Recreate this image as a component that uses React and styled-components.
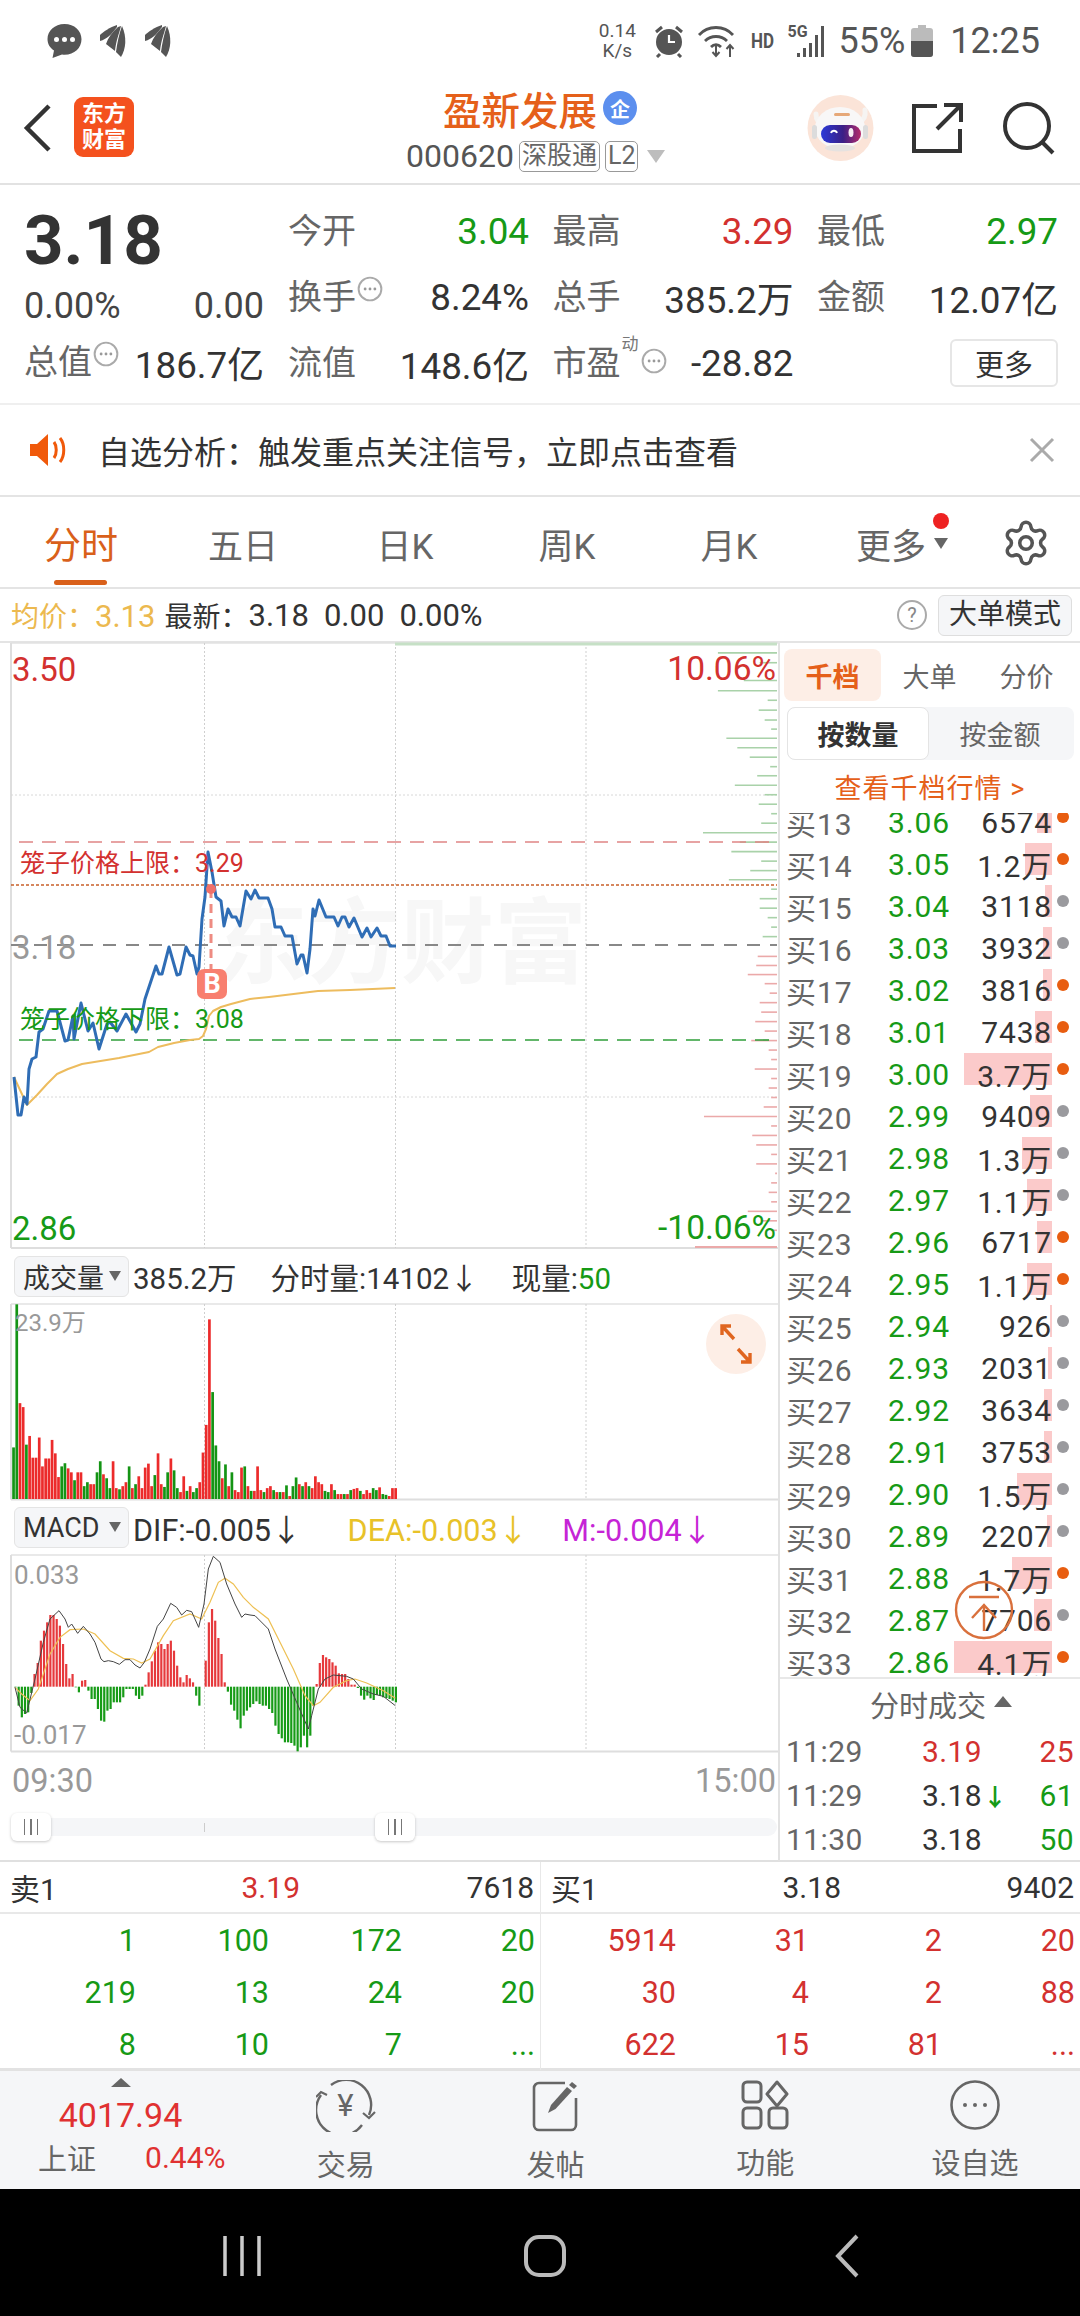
import React from 'react'
import styled, { createGlobalStyle } from 'styled-components'
import { Settings } from 'lucide-react'

const GlobalStyle = createGlobalStyle`
html, body { margin: 0; padding: 0; background: #fff; }
body { font-family: Roboto, "Noto Sans CJK SC", sans-serif; color: #333; }
* { box-sizing: border-box; }
`
const RED = '#d3312f'
const GREEN = '#169a16'
const ORANGE = '#e5601a'

const Page = styled.div`
width: 1080px; height: 2316px; display: flex; flex-direction: column; overflow: hidden; background: #fff;
`
const StatusBar = styled.div`
height: 75px; display: flex; align-items: center; justify-content: space-between; padding: 6px 40px 0 46px; color: #555;
`
const StatusGroup = styled.div`
display: flex; align-items: center; gap: ${p => p.$gap || 0}px;
`
const NetSpeed = styled.div`
width: 44px; font-size: 19px; line-height: 20px; text-align: center; margin-right: 14px;
`
const HdText = styled.span`
font-size: 20px; font-weight: 700; margin: 0 11px 0 8px; transform: scaleX(.85);
`
const SignalWrap = styled.div`
position: relative; width: 38px; height: 34px; margin-right: 13px;
`
const FiveG = styled.span`
position: absolute; left: 0; top: -2px; font-size: 16px; font-weight: 700;
`
const Battery = styled.span`
font-size: 36px; margin-right: 6px;
`
const Clock = styled.span`
font-size: 36px; margin-left: 17px;
`
const Header = styled.div`
height: 110px; display: flex; align-items: center; position: relative; border-bottom: 2px solid #e2e2e2; padding-left: 22px;
`
const Logo = styled.div`
width: 60px; height: 60px; border-radius: 9px; background: #f4511e; color: #fff; margin-left: 20px; font-size: 22px; font-weight: 700;
line-height: 26px; text-align: center; padding-top: 4px; margin-top: -4px;
`
const TitleBlock = styled.div`
position: absolute; left: 406px; top: 0; width: 280px; display: flex; flex-direction: column;
`
const TitleRow = styled.div`
display: flex; align-items: center; padding-left: 37px; height: 54px; margin-top: 6px;
color: ${ORANGE}; font-size: 38.5px; font-weight: 500;
`
const QiBadge = styled.span`
width: 34px; height: 34px; border-radius: 50%; background: #5c8fee; color: #fff; font-size: 20px; font-weight: 700; display: flex; align-items: center; justify-content: center; margin-left: 6px;
`
const CodeRow = styled.div`
display: flex; align-items: center; font-size: 32px; color: #555; margin-top: 4px; height: 34px;
`
const TagBadge = styled.span`
border: 1.5px solid #999; border-radius: 5px; font-size: 25px; line-height: 28px; height: 31px; padding: 0 2px; margin-left: ${p => p.$ml}px; color: #666; white-space: nowrap;
`
const DownTri = styled.span`
width: 0; height: 0; border-left: 9px solid transparent; border-right: 9px solid transparent; border-top: 13px solid #bdbdbd; margin-left: 9px;
`
const HeaderRight = styled.div`
margin-left: auto; display: flex; align-items: center; margin-right: 24px; gap: 36px; margin-top: -2px;
`
const SearchSvg = styled.svg`
margin-left: 3px;
`
const Quote = styled.div`
height: 220px; display: flex; padding: 13px 23px 0 24px; border-bottom: 2px solid #efefef;
`
const QuoteLeft = styled.div`
width: 240px; margin-right: 24px; display: flex; flex-direction: column; flex: none;
`
const BigPrice = styled.div`
font-size: 69px; font-weight: 700; height: 86px; line-height: 86px; color: #333; margin-bottom: 6px;
`
const ChangeRow = styled.div`
display: flex; justify-content: space-between; font-size: 36px; height: 32px; line-height: 32px; color: #444; margin-bottom: 7px;
`
const TotalRow = styled.div`
display: flex; align-items: center; height: 66px; font-size: 36.800px; color: #333;
`
const Label = styled.span`
font-size: 34px; color: #666; white-space: nowrap; line-height: 1;
`
const TotalValue = styled.span`
margin-left: auto;
`
const StatGrid = styled.div`
flex: 1; display: grid; grid-template-columns: repeat(3, 241px); grid-auto-rows: 66px; column-gap: 23.5px;
`
const Stat = styled.div`
display: flex; align-items: center; justify-content: space-between; font-size: 36.800px; color: ${p => p.$color || '#333'};
`
const LabelGroup = styled.div`
display: flex; align-items: flex-start; position: relative;
`
const DotsWrap = styled.span`
display: flex; margin-top: ${p => p.$mt ?? -4}px; margin-left: ${p => p.$ml ?? 1}px;
`
const Dong = styled.span`
font-size: 17px; color: #777; margin-top: -10px; line-height: 1; margin-left: 1px;
`
const MoreBtn = styled.div`
margin-left: auto; width: 108px; height: 48px; border: 2px solid #e6e6e6; border-radius: 6px; font-size: 29px; display: flex; align-items: center; justify-content: center; color: #333;
`
const Notice = styled.div`
height: 92px; display: flex; align-items: center; padding: 0 25px 0 29px; border-bottom: 2px solid #e4e4e4; font-size: 32px; color: #333;
`
const NoticeText = styled.span`
margin-left: 29px;
`
const NoticeClose = styled.span`
margin-left: auto; display: flex;
`
const Tabs = styled.div`
height: 92px; display: grid; grid-template-columns: repeat(6, 162px) 108px; align-items: center; border-bottom: 2px solid #e4e4e4;
`
const Tab = styled.div`
position: relative; text-align: center; font-size: ${p => p.$active ? 37 : 35}px; color: ${p => p.$active ? '#d9601a' : '#666'}; margin-top: 2px;
`
const TabLine = styled.i`
position: absolute; left: 54px; width: 53px; bottom: -15px; height: 5px; border-radius: 3px; background: #d9601a;
`
const MoreMark = styled.i`
position: absolute; left: 123px; top: -5px; width: 16px; height: 16px; border-radius: 50%; background: #ee2222;
`
const MoreTri = styled.i`
position: absolute; left: 124px; top: 20px; border-left: 7px solid transparent; border-right: 7px solid transparent; border-top: 11px solid #666;
`
const GearCell = styled.div`
display: flex; padding-left: 29px; color: #555; margin-top: 2px;
`
const InfoRow = styled.div`
height: 54px; display: flex; align-items: center; padding: 0 8px 0 11px; border-bottom: 2px solid #e4e4e4; font-size: 28px; color: #333; white-space: nowrap;
`
const AvgText = styled.span`
color: #ecb94f; margin-right: 9px;
`
const InfoNum = styled.span`
font-size: 31px; margin-left: ${p => p.$ml || 0}px;
`
const HelpIcon = styled.span`
margin-left: auto; width: 30px; height: 30px; border: 2.5px solid #aaa; border-radius: 50%; display: flex; align-items: center; justify-content: center; font-size: 20px; color: #888; margin-right: 11px;
`
const BigOrderBtn = styled.span`
width: 134px; height: 41px; background: #f5f6f8; border: 1.5px solid #dedede; border-radius: 6px; text-align: center; font-size: 28px; line-height: 38px; color: #333;
`
const Main = styled.div`
height: 1219px; display: grid; grid-template-columns: 778px 302px; border-bottom: 2px solid #e0e0e0;
`
const LeftCol = styled.div`
display: flex; flex-direction: column; padding-left: 11px; width: 778px;
`
const ChartBox = styled.div`
position: relative; width: 767px; height: ${p => p.$h}px; flex: none;
`
const ChartSvg = styled.svg`
position: absolute; inset: 0; display: block; overflow: visible;
`
const Watermark = styled.span`
position: absolute; left: 204px; top: 247px; font-size: 93px; line-height: 110px; font-weight: 700; color: #f7f7f7; white-space: nowrap;
`
const Overlay = styled.span`
position: absolute; top: ${p => p.$y}px; transform: translateY(-50%); white-space: nowrap; line-height: 1;
left: ${p => p.$left !== undefined ? `${p.$left}px` : 'auto'}; right: ${p => p.$right !== undefined ? `${p.$right}px` : 'auto'};
font-size: ${p => p.$size}px; color: ${p => p.$color};
`
const BMark = styled.span`
position: absolute; left: 186px; top: 326px; width: 30px; height: 30px; border-radius: 7px; background: #f87f6f; color: #fff; font-weight: 700; font-size: 27px; display: flex; align-items: center; justify-content: center;
`
const IndicatorHead = styled.div`
height: ${p => p.$h}px; display: flex; align-items: center; font-size: ${p => p.$size}px; color: #333; flex: none; margin-left: 3px; white-space: nowrap;
`
const Selector = styled.div`
width: 115px; height: 41px; background: #f5f6f8; border: 1.5px solid #e4e4e4; border-radius: 6px; display: flex; align-items: center; padding-left: 8px; font-size: 27px; color: #333; position: relative; margin-right: 4px; flex: none;
`
const SelectorTri = styled.i`
position: absolute; right: 7px; top: 14px; border-left: 6px solid transparent; border-right: 6px solid transparent; border-top: 10px solid #666;
`
const HeadItem = styled.span`
color: ${p => p.$color || '#333'}; margin-left: ${p => p.$ml || 0}px;
`
const ExpandBtn = styled.span`
position: absolute; left: 695px; top: 11px; width: 60px; height: 60px; border-radius: 50%; background: #fdeee6; display: flex; align-items: center; justify-content: center;
`
const TimeAxis = styled.div`
height: 57px; display: flex; justify-content: space-between; align-items: center; font-size: 32.5px; color: #999; width: 766px; padding: 0 1px; flex: none;
`
const SliderRow = styled.div`
position: relative; width: 766px; height: 18px; background: #f5f6f8; border-radius: 9px; margin-top: 9px; flex: none;
`
const SliderTick = styled.i`
position: absolute; left: 193px; top: 5px; width: 1px; height: 9px; background: #ccc;
`
const Handle = styled.span`
position: absolute; left: ${p => p.$x}px; top: -5px; width: 40px; height: 28px; background: #fff; border-radius: 6px; box-shadow: 0 1px 3px rgba(0,0,0,.22); display: flex; align-items: center; justify-content: center; gap: 5px;
& i { width: 1.5px; height: 16px; background: #777; }
`
const RightCol = styled.div`
border-left: 2px solid #e2e2e2; display: flex; flex-direction: column; position: relative; min-width: 0;
`
const SideTabs = styled.div`
display: grid; grid-template-columns: 97px 97px 97px; padding: 6px 0 0 4px;
`
const SideTab = styled.div`
height: 52px; display: flex; align-items: center; justify-content: center; font-size: 27px; border-radius: 8px;
background: ${p => p.$active ? '#fdeee6' : 'transparent'}; color: ${p => p.$active ? ORANGE : '#666'}; font-weight: ${p => p.$active ? 700 : 400};
`
const SubTabs = styled.div`
margin: 6px 6px 0 7px; height: 53px; background: #f5f6f8; border-radius: 8px; display: flex;
`
const SubTab = styled.div`
width: 142px; display: flex; align-items: center; justify-content: center; font-size: 27px;
${p => p.$active ? 'background:#fff;border:1.5px solid #e4e4e4;border-radius:8px;font-weight:700;color:#333;' : 'color:#666;'}
`
const DepthLink = styled.div`
height: 53px; font-size: 27px; color: ${ORANGE}; display: flex; align-items: center; justify-content: center; letter-spacing: 1px;
`
const DepthList = styled.div`
height: 863px; overflow: hidden; position: relative; flex: none;
`
const DepthInner = styled.div`
margin-top: -13px;
`
const DepthRow = styled.div`
position: relative; height: 42px; display: grid; grid-template-columns: 102px 60px 104px; align-items: center; padding-left: 6px; font-size: 30px; padding-bottom: 8px; letter-spacing: .9px;
`
const DepthLabel = styled.span`
color: #666;
`
const DepthPrice = styled.span`
color: ${GREEN};
`
const DepthBar = styled.i`
position: absolute; top: 1px; right: 28px; height: 32px; background: #fbcaca;
`
const DepthVol = styled.span`
position: relative; text-align: right; color: #333; white-space: nowrap; letter-spacing: .8px;
`
const DepthDot = styled.i`
position: absolute; right: 11px; top: 11px; width: 12px; height: 12px; border-radius: 50%; background: ${p => p.$hot ? '#e85d10' : '#9a9a9e'};
`
const TopBtn = styled.span`
position: absolute; left: 174px; top: 766px; display: flex;
`
const TradeHead = styled.div`
height: 52px; border-top: 2px solid #e8e8e8; display: flex; align-items: center; justify-content: center; font-size: 29px; color: #666; flex: none; gap: 8px; padding-left: 22px; margin-top: 1px;
`
const UpTri = styled.i`
border-left: 9px solid transparent; border-right: 9px solid transparent; border-bottom: 11px solid #666; margin-top: -6px;
`
const TradeRow = styled.div`
height: 44px; display: grid; grid-template-columns: 136px 60px 1fr; align-items: center; padding: 0 6px 0 6px; font-size: 30px; letter-spacing: .4px;
`
const TradeTime = styled.span`
color: #666;
`
const TradePrice = styled.span`
color: ${p => p.$color}; position: relative; white-space: nowrap;
`
const TradeArrow = styled.span`
color: ${GREEN}; font-size: 24px; font-weight: 700; margin-left: 1px;
`
const TradeVol = styled.span`
text-align: right; color: ${p => p.$color};
`
const Book = styled.div`
height: 209px; display: grid; grid-template-columns: 541px 539px; border-bottom: 3px solid #e2e2e2; flex: none;
`
const BookSide = styled.div`
display: flex; flex-direction: column; border-right: ${p => p.$line ? '1.5px solid #e8e8e8' : 'none'};
`
const BookHead = styled.div`
height: 52px; display: grid; grid-template-columns: 160px 130px 1fr; align-items: center; padding: 0 6px 0 10px; font-size: 30px; border-bottom: 2px solid #e8e8e8;
& span:nth-child(n+2) { text-align: right; }
`
const BookGrid = styled.div`
display: grid; grid-template-columns: repeat(4, 133px); justify-content: end; grid-auto-rows: 52px; align-items: center; padding-right: 5px; font-size: 30.500px; color: ${p => p.$color};
& span { text-align: right; }
`
const BottomBar = styled.div`
height: 118px; background: #f5f6f8; display: grid; grid-template-columns: 241px repeat(4, 1fr); flex: none;
`
const IndexBlock = styled.div`
display: flex; flex-direction: column; align-items: center; padding-top: 7px; position: relative;
`
const IndexTri = styled.i`
border-left: 10px solid transparent; border-right: 10px solid transparent; border-bottom: 9px solid #666;
`
const IndexValue = styled.div`
color: #e03131; font-size: 34px; line-height: 40px; margin-top: 8px;
`
const IndexLower = styled.div`
width: 100%; display: flex; align-items: center; padding-left: 38px; margin-top: 5px; height: 34px;
`
const IndexName = styled.span`
font-size: 29px; color: #666;
`
const IndexPct = styled.span`
font-size: 30px; color: #e03131; margin-left: 49px;
`
const ToolItem = styled.div`
display: flex; flex-direction: column; align-items: center; padding-top: 9px; color: #666; font-size: 29px;
& svg { display: block; }
& span { margin-top: 14px; line-height: 40px; }
`
const NavBar = styled.div`
background: #000; display: grid; grid-template-columns: repeat(3, 302.5px); flex: 1; padding: 6px 0 0 90.75px;
`
const NavCell = styled.div`
display: flex; align-items: center; justify-content: center;
`

const toPts = arr => arr.map(([x, y]) => `${x},${y}`).join(' ')

const bluePts = [[14,1078],[18,1116],[21,1116],[24,1098],[27,1105],[29,1070],[32,1060],[36,1058],[39,1033],[43,1030],[49,1012],[57,1012],[65,1042],[68,1041],[73,1017],[74,1040],[81,1004],[88,1032],[93,1024],[99,1050],[107,1025],[110,1023],[117,1032],[126,1015],[136,1033],[140,1025],[145,1000],[156,967],[159,975],[162,975],[169,948],[177,976],[180,975],[186,948],[190,956],[193,957],[197,975],[199,968],[202,920],[205,898],[208,853],[212,873],[216,898],[221,902],[224,927],[228,910],[232,918],[236,918],[240,927],[246,892],[251,900],[255,891],[259,899],[268,899],[272,910],[275,928],[281,928],[285,937],[292,937],[297,965],[301,956],[303,956],[307,974],[310,950],[313,910],[315,917],[319,901],[326,918],[334,918],[338,927],[342,918],[345,918],[349,928],[354,919],[362,938],[367,929],[371,938],[377,929],[381,937],[386,937],[390,947],[396,947]]
const avgPts = [[14,1078],[27,1106],[37,1096],[47,1085],[57,1075],[68,1070],[82,1065],[119,1059],[149,1053],[158,1048],[174,1044],[190,1041],[199,1040],[203,1037],[206,1030],[209,1017],[213,1012],[221,1008],[231,1005],[250,1000],[269,998],[318,992],[350,991],[395,989]]

const greenDepth = [[35,1443],[60,1527],[105,1495],[131,1443],[155,1543],[180,1525],[205,1537],[228,1550],[251,1460],[275,1482],[299,1507],[323,1548],[346,1522],[370,1477],[394,1537],[418,1525],[442,1550],[466,1530],[490,1413],[514,1487],[538,1470],[562,1530],[586,1508],[609,1465],[633,1550],[657,1527],[681,1527],[705,1543],[729,1550],[753,1533]]
const redDepth = [[803,1523],[826,1520],[849,1503],[872,1537],[896,1547],[920,1527],[944,1530],[968,1518],[992,1537],[1016,1510],[1040,1545],[1064,1550],[1088,1517],[1112,1550],[1136,1545],[1160,1550],[1184,1535],[1208,1415],[1232,1550],[1256,1512],[1280,1520],[1304,1550],[1328,1520],[1352,1558],[1376,1550],[1400,1545],[1424,1550],[1448,1503],[1472,1530],[1496,1550]]

const volData = 'g502 g140 r390 r400 g495 r473 r528 r528 r477 r550 r530 r530 r483 r517 r577 g550 g542 r555 r565 g585 r565 r565 g600 g590 r595 r595 g565 g537 r570 g580 g605 r537 r605 g608 r600 r590 g550 r605 g595 r575 r605 r553 r543 r600 g572 r517 r595 g602 g565 r530 g560 g605 r615 r575 g612 r600 g615 g605 r590 r515 r445 r178 g362 g497 g537 r580 g545 r600 g565 r610 r615 r553 g550 r600 g612 r612 r550 r610 g615 r605 r600 g610 r615 g615 r615 g598 r625 g600 g578 r595 g600 r590 g600 r605 r575 r590 r595 g612 g615 r595 g610 r620 r620 g620 r620 g610 r607 r605 g612 r620 r610 r617 g605 g610 r603 g620 g622 r625 r605 r605'.split(' ')

const macdData = 'g445 g500 g535 g525 g520 g462 r405 r372 r305 r275 r250 r228 r228 r240 r260 r315 r375 r418 r405 g445 g460 r425 r423 g455 g480 g480 g510 g545 g548 g515 g510 g490 g490 g490 g475 g450 g450 g450 g470 g480 g470 r437 r400 r367 r335 r310 r315 r330 r315 r305 r335 r380 r415 r430 r408 r418 r430 g470 g500 n0 r365 r250 r210 r245 r297 r345 r430 g458 g497 g515 g542 g568 g530 g515 g505 g495 g487 g495 g500 g500 g510 g522 g560 g585 g598 g610 g610 g612 g620 g637 g625 g590 g625 g590 g500 r435 r372 r348 r355 r360 r370 r380 r403 r405 r405 r420 r437 r437 g447 g470 g482 g470 g478 g483 g468 g470 g475 g477 g480 g485 g490'.split(' ')
const difLine = [[45,445],[60,505],[80,522],[105,420],[130,310],[150,240],[177,215],[195,240],[205,265],[215,255],[233,283],[250,262],[270,285],[285,310],[303,360],[312,368],[325,365],[340,368],[358,376],[375,362],[390,362],[405,378],[420,387],[433,370],[450,330],[472,262],[490,240],[512,193],[530,205],[545,228],[560,214],[575,218],[596,265],[612,195],[625,90],[640,52],[660,70],[680,135],[705,195],[725,235],[735,225],[750,228],[765,230],[805,270],[825,330],[860,420],[890,490],[925,570],[935,530],[955,450],[975,420],[1000,408],[1040,412],[1060,420],[1085,450],[1120,465],[1150,472],[1186,500]]
const deaLine = [[45,445],[65,465],[90,485],[115,450],[150,345],[180,295],[210,272],[250,270],[285,285],[330,335],[370,358],[400,360],[425,372],[450,360],[490,290],[520,245],[570,225],[605,240],[630,190],[655,130],[675,118],[700,135],[730,175],[760,205],[805,240],[840,310],[880,390],[915,470],[940,500],[960,490],[1000,445],[1040,425],[1065,420],[1100,432],[1150,455],[1186,478]]
const macdX = ([x, y]) => [x / 3, 1540 + y / 3]

const depth = [
  ['买13','3.06','6574',15,1],['买14','3.05','1.2万',27,1],['买15','3.04','3118',7,0],['买16','3.03','3932',9,0],['买17','3.02','3816',9,1],
  ['买18','3.01','7438',17,1],['买19','3.00','3.7万',88,1],['买20','2.99','9409',22,0],['买21','2.98','1.3万',30,0],['买22','2.97','1.1万',25,0],
  ['买23','2.96','6717',15,1],['买24','2.95','1.1万',25,1],['买25','2.94','926',2,0],['买26','2.93','2031',4,0],['买27','2.92','3634',8,0],
  ['买28','2.91','3753',8,0],['买29','2.90','1.5万',35,0],['买30','2.89','2207',5,0],['买31','2.88','1.7万',40,1],['买32','2.87','7706',18,0],['买33','2.86','4.1万',98,1],
]

const GridV = ({ top, bottom }) => (
  <>
    {[204.5, 395.5, 586].map(x => (
      <line key={x} x1={x} x2={x} y1={top} y2={bottom} stroke="#cfcfcf" strokeWidth="1" strokeDasharray="2 2" />
    ))}
  </>
)

const Frame = ({ top, bottom, left = 11, right = 778 }) => (
  <>
    <line x1={left} x2={right} y1={top} y2={top} stroke="#e2e2e2" strokeWidth="1.5" />
    <line x1={left} x2={right} y1={bottom} y2={bottom} stroke="#dedede" strokeWidth="2" />
    <line x1={left} x2={left} y1={top} y2={bottom} stroke="#dedede" strokeWidth="2" />
  </>
)

const PriceChart = () => (
  <ChartBox $h={606}>
    <Watermark>东方财富</Watermark>
    <ChartSvg width="767" height="606" viewBox="11 644 767 606">
      <Frame top={644} bottom={1249} />
      <GridV top={644} bottom={1249} />
      <line x1={395} x2={777} y1={645} y2={645} stroke="#c6e0c6" strokeWidth="3" />
      <line x1={11} x2={777} y1={796} y2={796} stroke="#d8d8d8" strokeDasharray="2 2" />
      <line x1={11} x2={777} y1={1098} y2={1098} stroke="#d8d8d8" strokeDasharray="2 2" />
      {greenDepth.map(([y, x]) => <line key={y} x1={x / 2.01} x2={777} y1={640 + y / 2.53} y2={640 + y / 2.53} stroke="#a9d2a9" strokeWidth="1.6" />)}
      {redDepth.map(([y, x]) => <line key={y} x1={x / 2.01} x2={777} y1={640 + y / 2.53} y2={640 + y / 2.53} stroke="#eba9a9" strokeWidth="1.6" />)}
      <line x1={695} x2={777} y1={1248} y2={1248} stroke="#eba9a9" strokeWidth="2" />
      <line x1={19} x2={777} y1={843} y2={843} stroke="#e08585" strokeWidth="1.6" strokeDasharray="14 9" />
      <line x1={11} x2={777} y1={886} y2={886} stroke="#c8602a" strokeWidth="1.3" strokeDasharray="3 2" />
      <line x1={11} x2={777} y1={946} y2={946} stroke="#888" strokeWidth="2" strokeDasharray="13 10" />
      <line x1={19} x2={777} y1={1041} y2={1041} stroke="#2f9e3a" strokeWidth="1.6" strokeDasharray="14 9" />
      <polyline points={toPts(avgPts)} fill="none" stroke="#edbc5e" strokeWidth="2" strokeLinejoin="round" />
      <polyline points={toPts(bluePts)} fill="none" stroke="#2f6db5" strokeWidth="3" strokeLinejoin="round" />
      <line x1={211} x2={211} y1={890} y2={972} stroke="#ee8b82" strokeWidth="3" strokeDasharray="9 6" />
      <circle cx={211} cy={890} r={5} fill="#f0706a" />
    </ChartSvg>
    <BMark>B</BMark>
    <Overlay $y={26} $left={1} $size={33} $color={RED}>3.50</Overlay>
    <Overlay $y={26} $right={2} $size={33.500} $color={RED}>10.06%</Overlay>
    <Overlay $y={304} $left={1} $size={33} $color="#999">3.18</Overlay>
    <Overlay $y={585} $left={1} $size={33} $color={GREEN}>2.86</Overlay>
    <Overlay $y={585} $right={2} $size={33.500} $color={GREEN}>-10.06%</Overlay>
    <Overlay $y={220} $left={9} $size={25} $color={RED}>笼子价格上限：3.29</Overlay>
    <Overlay $y={376} $left={9} $size={25} $color={GREEN}>笼子价格下限：3.08</Overlay>
  </ChartBox>
)

const VolumeChart = () => (
  <ChartBox $h={197}>
    <ChartSvg width="767" height="197" viewBox="11 1304 767 197">
      <Frame top={1305} bottom={1500.5} />
      <GridV top={1305} bottom={1500} />
      {volData.map((d, i) => {
        const y = 1250 + Number(d.slice(1)) / 2.53
        const step = (397 - 12.2 - 2.7) / (volData.length - 1)
        return <rect key={i} x={12.2 + i * step} y={y} width={2.7} height={1500 - y} fill={d[0] === 'r' ? '#ec2b2b' : '#149414'} />
      })}
    </ChartSvg>
    <Overlay $y={20} $left={4} $size={24} $color="#999">23.9万</Overlay>
    <ExpandBtn>
      <svg width="32" height="40" viewBox="0 0 32 40" fill="none" stroke="#e0651f" strokeWidth="3.4">
        <path d="M2 2 L14 15 M2 11 V2 H11" />
        <path d="M30 38 L18 25 M30 29 V38 H21" />
      </svg>
    </ExpandBtn>
  </ChartBox>
)

const MacdChart = () => (
  <ChartBox $h={197}>
    <ChartSvg width="767" height="197" viewBox="11 1556 767 197">
      <Frame top={1556} bottom={1752.5} />
      <GridV top={1556} bottom={1752} />
      {macdData.map((d, i) => {
        if (d[0] === 'n') return null
        const v = 1540 + Number(d.slice(1)) / 3
        const zero = 1687.7
        const step = (397 - 14.4 - 2.2) / (macdData.length - 1)
        return <rect key={i} x={14.4 + i * step} y={Math.min(v, zero)} width={2.2} height={Math.abs(v - zero)} fill={d[0] === 'r' ? '#e6393c' : '#179b17'} />
      })}
      <polyline points={toPts(deaLine.map(macdX))} fill="none" stroke="#eec053" strokeWidth="1.2" />
      <polyline points={toPts(difLine.map(macdX))} fill="none" stroke="#444" strokeWidth="1" />
    </ChartSvg>
    <Overlay $y={20} $left={3} $size={26} $color="#999">0.033</Overlay>
    <Overlay $y={180} $left={3} $size={26} $color="#999">-0.017</Overlay>
  </ChartBox>
)

const Dots = ({ size = 26, mt, ml }) => (
  <DotsWrap $mt={mt} $ml={ml}>
    <svg width={size} height={size} viewBox="0 0 24 24" fill="none">
      <circle cx="12" cy="12" r="10.5" stroke="#aaa" strokeWidth="1.8" />
      <circle cx="7.5" cy="12" r="1.3" fill="#999" />
      <circle cx="12" cy="12" r="1.3" fill="#999" />
      <circle cx="16.5" cy="12" r="1.3" fill="#999" />
    </svg>
  </DotsWrap>
)

const StatusLeft = () => (
  <StatusGroup $gap={15}>
    <svg width="37" height="36" viewBox="0 0 36 36">
      <path d="M18 1C8 1 1 8 1 16c0 5 2.500 9 6.500 11.500L6 35l9.500-3.500c1 .2 1.800.3 2.500.3 10 0 17-7 17-15.500S28 1 18 1z" fill="#555" />
      <circle cx="10" cy="16.500" r="2.500" fill="#fff" /><circle cx="18" cy="16.500" r="2.500" fill="#fff" /><circle cx="26" cy="16.500" r="2.500" fill="#fff" />
    </svg>
    {[0, 1].map(i => (
      <svg key={i} width="30" height="34" viewBox="0 0 30 34" fill="#555">
        <path d="M19 1C12 3 5 8 2 11L2 17C9 15 13 11 19 3z" />
        <path d="M20 3C14 8 10 14 8 20L17 27C18 17 21 10 23 2z" />
        <path d="M24 2C21 10 19 20 18 28L23 33C28 25 29 13 24 2z" />
      </svg>
    ))}
  </StatusGroup>
)

const StatusRight = () => (
  <StatusGroup>
    <NetSpeed>0.14<br />K/s</NetSpeed>
    <svg width="32" height="34" viewBox="0 0 32 34" fill="none" stroke="#555" strokeWidth="3">
      <circle cx="16" cy="18" r="11.5" fill="#555" />
      <path d="M16 11v7h6" stroke="#fff" strokeWidth="2.2" />
      <path d="M3 8l6-5M29 8l-6-5M7 30l-3 3M25 30l3 3" />
    </svg>
    <svg width="44" height="34" viewBox="0 0 44 34" fill="none" stroke="#555" strokeWidth="2.8" style={{ marginLeft: 12 }}>
      <path d="M2 11c9-10 25-10 34 0M8 17c6-6 16-6 22 0M14 23c3-3 7-3 10 0" />
      <path d="M19 20v12M15.500 28l3.500 4 3.500-4M33 33V22M29.500 25l3.500-4 3.500 4" strokeWidth="2" />
    </svg>
    <HdText>HD</HdText>
    <SignalWrap>
      <FiveG>5G</FiveG>
      <svg width="38" height="34" viewBox="0 0 38 34" fill="#555">
        <rect x="9" y="29" width="3" height="4" /><rect x="15" y="24" width="3" height="9" /><rect x="21" y="19" width="3" height="14" /><rect x="27" y="11" width="3" height="22" /><rect x="33" y="2" width="3" height="31" />
      </svg>
    </SignalWrap>
    <Battery>55%</Battery>
    <svg width="22" height="32" viewBox="0 0 22 32">
      <rect x="7" y="0" width="8" height="3" fill="#bbb" />
      <rect x="0" y="3" width="22" height="29" rx="3" fill="#bbb" />
      <path d="M0 16h22v13a3 3 0 0 1-3 3H3a3 3 0 0 1-3-3z" fill="#555" />
    </svg>
    <Clock>12:25</Clock>
  </StatusGroup>
)

const Avatar = () => (
  <svg width="68" height="66" viewBox="0 0 68 66">
    <defs>
      <linearGradient id="visor" x1="0" x2="1" y1="0" y2="0">
        <stop offset="0" stopColor="#2a3ad8" />
        <stop offset=".55" stopColor="#3b1f86" />
        <stop offset="1" stopColor="#b52a6a" />
      </linearGradient>
    </defs>
    <ellipse cx="33.500" cy="33" rx="33" ry="33" fill="#fbe4d8" />
    <path d="M9 19c0 6 3 10 8 10M58 15c1 7-2 11-7 13" stroke="#f6f4f2" strokeWidth="5" fill="none" strokeLinecap="round" />
    <ellipse cx="33" cy="33" rx="25" ry="21" fill="#f8f7f7" />
    <rect x="5" y="30" width="5" height="14" rx="2.500" fill="#dcdcdc" />
    <rect x="56" y="30" width="5" height="14" rx="2.500" fill="#dcdcdc" />
    <rect x="27" y="18" width="16" height="3" rx="1.500" fill="#e6a878" />
    <rect x="14" y="30" width="40" height="18" rx="9" fill="url(#visor)" />
    <path d="M24 38c1-3 5-3 6 0" stroke="#fff" strokeWidth="1.800" fill="none" />
    <ellipse cx="44" cy="37.500" rx="2.500" ry="4.500" fill="#f6eef4" />
    <ellipse cx="33" cy="53" rx="15" ry="3.500" fill="#e6e2e0" />
  </svg>
)

const Speaker = () => (
  <svg width="40" height="34" viewBox="0 0 40 34">
    <path d="M1 11h7l11-10v32L8 23H1z" fill="#f0590a" />
    <path d="M25 9c3 4 3 12 0 16M31 5c5 6 5 18 0 24" stroke="#f0590a" strokeWidth="3" fill="none" />
  </svg>
)

const CloseX = () => (
  <svg width="26" height="26" viewBox="0 0 26 26" stroke="#aaa" strokeWidth="3"><path d="M2 2l22 22M24 2L2 24" /></svg>
)

const TopArrow = () => (
  <svg width="60" height="62" viewBox="0 0 60 62" fill="none" stroke="#d9703c" strokeWidth="2.400">
    <circle cx="30" cy="31" r="28" />
    <path d="M15 18h30M30 52V26M18 39l12-13 12 13" />
  </svg>
)

export default function App() {
  return (
    <Page>
      <GlobalStyle />
      <StatusBar>
        <StatusLeft />
        <StatusRight />
      </StatusBar>
      <Header>
        <svg width="32" height="50" viewBox="0 0 32 50" fill="none" stroke="#333" strokeWidth="4.500" style={{ marginTop: -2 }}>
          <path d="M27 3L5 25l22 22" />
        </svg>
        <Logo>东方<br />财富</Logo>
        <TitleBlock>
          <TitleRow>盈新发展<QiBadge>企</QiBadge></TitleRow>
          <CodeRow>000620<TagBadge $ml={5}>深股通</TagBadge><TagBadge $ml={5}>L2</TagBadge><DownTri /></CodeRow>
        </TitleBlock>
        <HeaderRight>
          <Avatar />
          <svg width="52" height="52" viewBox="0 0 52 52" fill="none" stroke="#333" strokeWidth="4">
            <path d="M26 4H3v45h46V27M26 27L49 4M33 3h17v17" />
          </svg>
          <SearchSvg width="54" height="54" viewBox="0 0 54 54" fill="none" stroke="#333" strokeWidth="4">
            <circle cx="25" cy="25" r="22" /><path d="M40 41l11 11" />
          </SearchSvg>
        </HeaderRight>
      </Header>
      <Quote>
        <QuoteLeft>
          <BigPrice>3.18</BigPrice>
          <ChangeRow><span>0.00%</span><span>0.00</span></ChangeRow>
          <TotalRow>
            <LabelGroup><Label>总值</Label><Dots /></LabelGroup>
            <TotalValue>186.7亿</TotalValue>
          </TotalRow>
        </QuoteLeft>
        <StatGrid>
          <Stat $color={GREEN}><Label>今开</Label>3.04</Stat>
          <Stat $color={RED}><Label>最高</Label>3.29</Stat>
          <Stat $color={GREEN}><Label>最低</Label>2.97</Stat>
          <Stat><LabelGroup><Label>换手</Label><Dots mt={-4} /></LabelGroup>8.24%</Stat>
          <Stat><Label>总手</Label>385.2万</Stat>
          <Stat><Label>金额</Label>12.07亿</Stat>
          <Stat><Label>流值</Label>148.6亿</Stat>
          <Stat><LabelGroup><Label>市盈</Label><Dong>动</Dong><Dots mt={2} ml={2} /></LabelGroup>-28.82</Stat>
          <Stat><MoreBtn>更多</MoreBtn></Stat>
        </StatGrid>
      </Quote>
      <Notice>
        <Speaker />
        <NoticeText>自选分析：触发重点关注信号，立即点击查看</NoticeText>
        <NoticeClose><CloseX /></NoticeClose>
      </Notice>
      <Tabs>
        <Tab $active>分时<TabLine /></Tab>
        <Tab>五日</Tab>
        <Tab>日K</Tab>
        <Tab>周K</Tab>
        <Tab>月K</Tab>
        <Tab>更多<MoreMark /><MoreTri /></Tab>
        <GearCell><Settings size={50} strokeWidth={1.7} /></GearCell>
      </Tabs>
      <InfoRow>
        <AvgText>均价：<InfoNum>3.13</InfoNum></AvgText>
        最新：<InfoNum>3.18</InfoNum><InfoNum $ml={15}>0.00</InfoNum><InfoNum $ml={15}>0.00%</InfoNum>
        <HelpIcon>?</HelpIcon>
        <BigOrderBtn>大单模式</BigOrderBtn>
      </InfoRow>
      <Main>
        <LeftCol>
          <PriceChart />
          <IndicatorHead $h={54} $size={29.500}>
            <Selector>成交量<SelectorTri /></Selector>
            <HeadItem>385.2万</HeadItem>
            <HeadItem $ml={34}>分时量:14102↓</HeadItem>
            <HeadItem $ml={33}>现量:<HeadItem $color={GREEN}>50</HeadItem></HeadItem>
          </IndicatorHead>
          <VolumeChart />
          <IndicatorHead $h={55} $size={30.600}>
            <Selector>MACD<SelectorTri /></Selector>
            <HeadItem>DIF:-0.005↓</HeadItem>
            <HeadItem $color="#e8c228" $ml={46}>DEA:-0.003↓</HeadItem>
            <HeadItem $color="#c624d6" $ml={34}>M:-0.004↓</HeadItem>
          </IndicatorHead>
          <MacdChart />
          <TimeAxis><span>09:30</span><span>15:00</span></TimeAxis>
          <SliderRow>
            <SliderTick />
            <Handle $x={0}><i /><i /><i /></Handle>
            <Handle $x={364}><i /><i /><i /></Handle>
          </SliderRow>
        </LeftCol>
        <RightCol>
          <SideTabs>
            <SideTab $active>千档</SideTab>
            <SideTab>大单</SideTab>
            <SideTab>分价</SideTab>
          </SideTabs>
          <SubTabs>
            <SubTab $active>按数量</SubTab>
            <SubTab>按金额</SubTab>
          </SubTabs>
          <DepthLink>查看千档行情 &gt;</DepthLink>
          <DepthList>
            <DepthInner>
              {depth.map(([label, price, vol, w, hot]) => (
                <DepthRow key={label}>
                  <DepthLabel>{label}</DepthLabel>
                  <DepthPrice>{price}</DepthPrice>
                  <DepthBar style={{ width: w }} />
                  <DepthVol>{vol}</DepthVol>
                  <DepthDot $hot={!!hot} />
                </DepthRow>
              ))}
            </DepthInner>
            <TopBtn><TopArrow /></TopBtn>
          </DepthList>
          <TradeHead>分时成交<UpTri /></TradeHead>
          <TradeRow><TradeTime>11:29</TradeTime><TradePrice $color={RED}>3.19</TradePrice><TradeVol $color={RED}>25</TradeVol></TradeRow>
          <TradeRow><TradeTime>11:29</TradeTime><TradePrice $color="#333">3.18<TradeArrow>↓</TradeArrow></TradePrice><TradeVol $color={GREEN}>61</TradeVol></TradeRow>
          <TradeRow><TradeTime>11:30</TradeTime><TradePrice $color="#333">3.18</TradePrice><TradeVol $color={GREEN}>50</TradeVol></TradeRow>
        </RightCol>
      </Main>
      <Book>
        <BookSide $line>
          <BookHead><span>卖1</span><span style={{ color: RED }}>3.19</span><span>7618</span></BookHead>
          <BookGrid $color={GREEN}>
            {['1','100','172','20','219','13','24','20','8','10','7','...'].map((v, i) => <span key={i}>{v}</span>)}
          </BookGrid>
        </BookSide>
        <BookSide>
          <BookHead><span>买1</span><span>3.18</span><span>9402</span></BookHead>
          <BookGrid $color={RED}>
            {['5914','31','2','20','30','4','2','88','622','15','81','...'].map((v, i) => <span key={i}>{v}</span>)}
          </BookGrid>
        </BookSide>
      </Book>
      <BottomBar>
        <IndexBlock>
          <IndexTri />
          <IndexValue>4017.94</IndexValue>
          <IndexLower><IndexName>上证</IndexName><IndexPct>0.44%</IndexPct></IndexLower>
        </IndexBlock>
        <ToolItem>
          <svg width="60" height="52" viewBox="0 0 60 52" fill="none" stroke="#666" strokeWidth="2.400">
            <path d="M15 5A25 25 0 0 1 53 35M46 45A25 25 0 0 1 5 15" />
            <path d="M47 33l6 5 6-6M0 17l5-5 6 3" strokeWidth="2.200" />
            <text x="29.500" y="36" textAnchor="middle" fontSize="31" fill="#666" stroke="none">¥</text>
          </svg>
          <span>交易</span>
        </ToolItem>
        <ToolItem>
          <svg width="48" height="52" viewBox="0 0 48 52" fill="none" stroke="#666" strokeWidth="2.600">
            <path d="M33 3H7a5 5 0 0 0-5 5v37a5 5 0 0 0 5 5h32a5 5 0 0 0 5-5V18" />
            <path d="M16 33L19 25L35 7L40 11L23.500 29Z" fill="#666" stroke="none" />
            <path d="M37 5l3-3 5 4-3 3z" fill="#666" stroke="none" />
          </svg>
          <span>发帖</span>
        </ToolItem>
        <ToolItem>
          <svg width="48" height="50" viewBox="0 0 48 50" fill="none" stroke="#666" strokeWidth="3">
            <rect x="2" y="2" width="18" height="20" rx="4" />
            <path d="M36 2l10 12-10 12-10-12z" strokeLinejoin="round" />
            <rect x="2" y="28" width="18" height="20" rx="4" />
            <rect x="28" y="28" width="18" height="20" rx="4" />
          </svg>
          <span>功能</span>
        </ToolItem>
        <ToolItem>
          <svg width="50" height="50" viewBox="0 0 50 50" fill="none" stroke="#666" strokeWidth="2.600">
            <circle cx="25" cy="25" r="23.500" />
            <circle cx="15" cy="25" r="2" fill="#666" stroke="none" /><circle cx="25" cy="25" r="2" fill="#666" stroke="none" /><circle cx="35" cy="25" r="2" fill="#666" stroke="none" />
          </svg>
          <span>设自选</span>
        </ToolItem>
      </BottomBar>
      <NavBar>
        <NavCell>
          <svg width="38" height="42" viewBox="0 0 38 42" stroke="#ccc" strokeWidth="3.500"><path d="M2 1v40M19 1v40M36 1v40" /></svg>
        </NavCell>
        <NavCell>
          <svg width="42" height="42" viewBox="0 0 42 42" fill="none" stroke="#bbb" strokeWidth="4"><rect x="2" y="2" width="38" height="38" rx="13" /></svg>
        </NavCell>
        <NavCell>
          <svg width="26" height="44" viewBox="0 0 26 44" fill="none" stroke="#bbb" strokeWidth="4"><path d="M23 2L4 22l19 20" /></svg>
        </NavCell>
      </NavBar>
    </Page>
  )
}
